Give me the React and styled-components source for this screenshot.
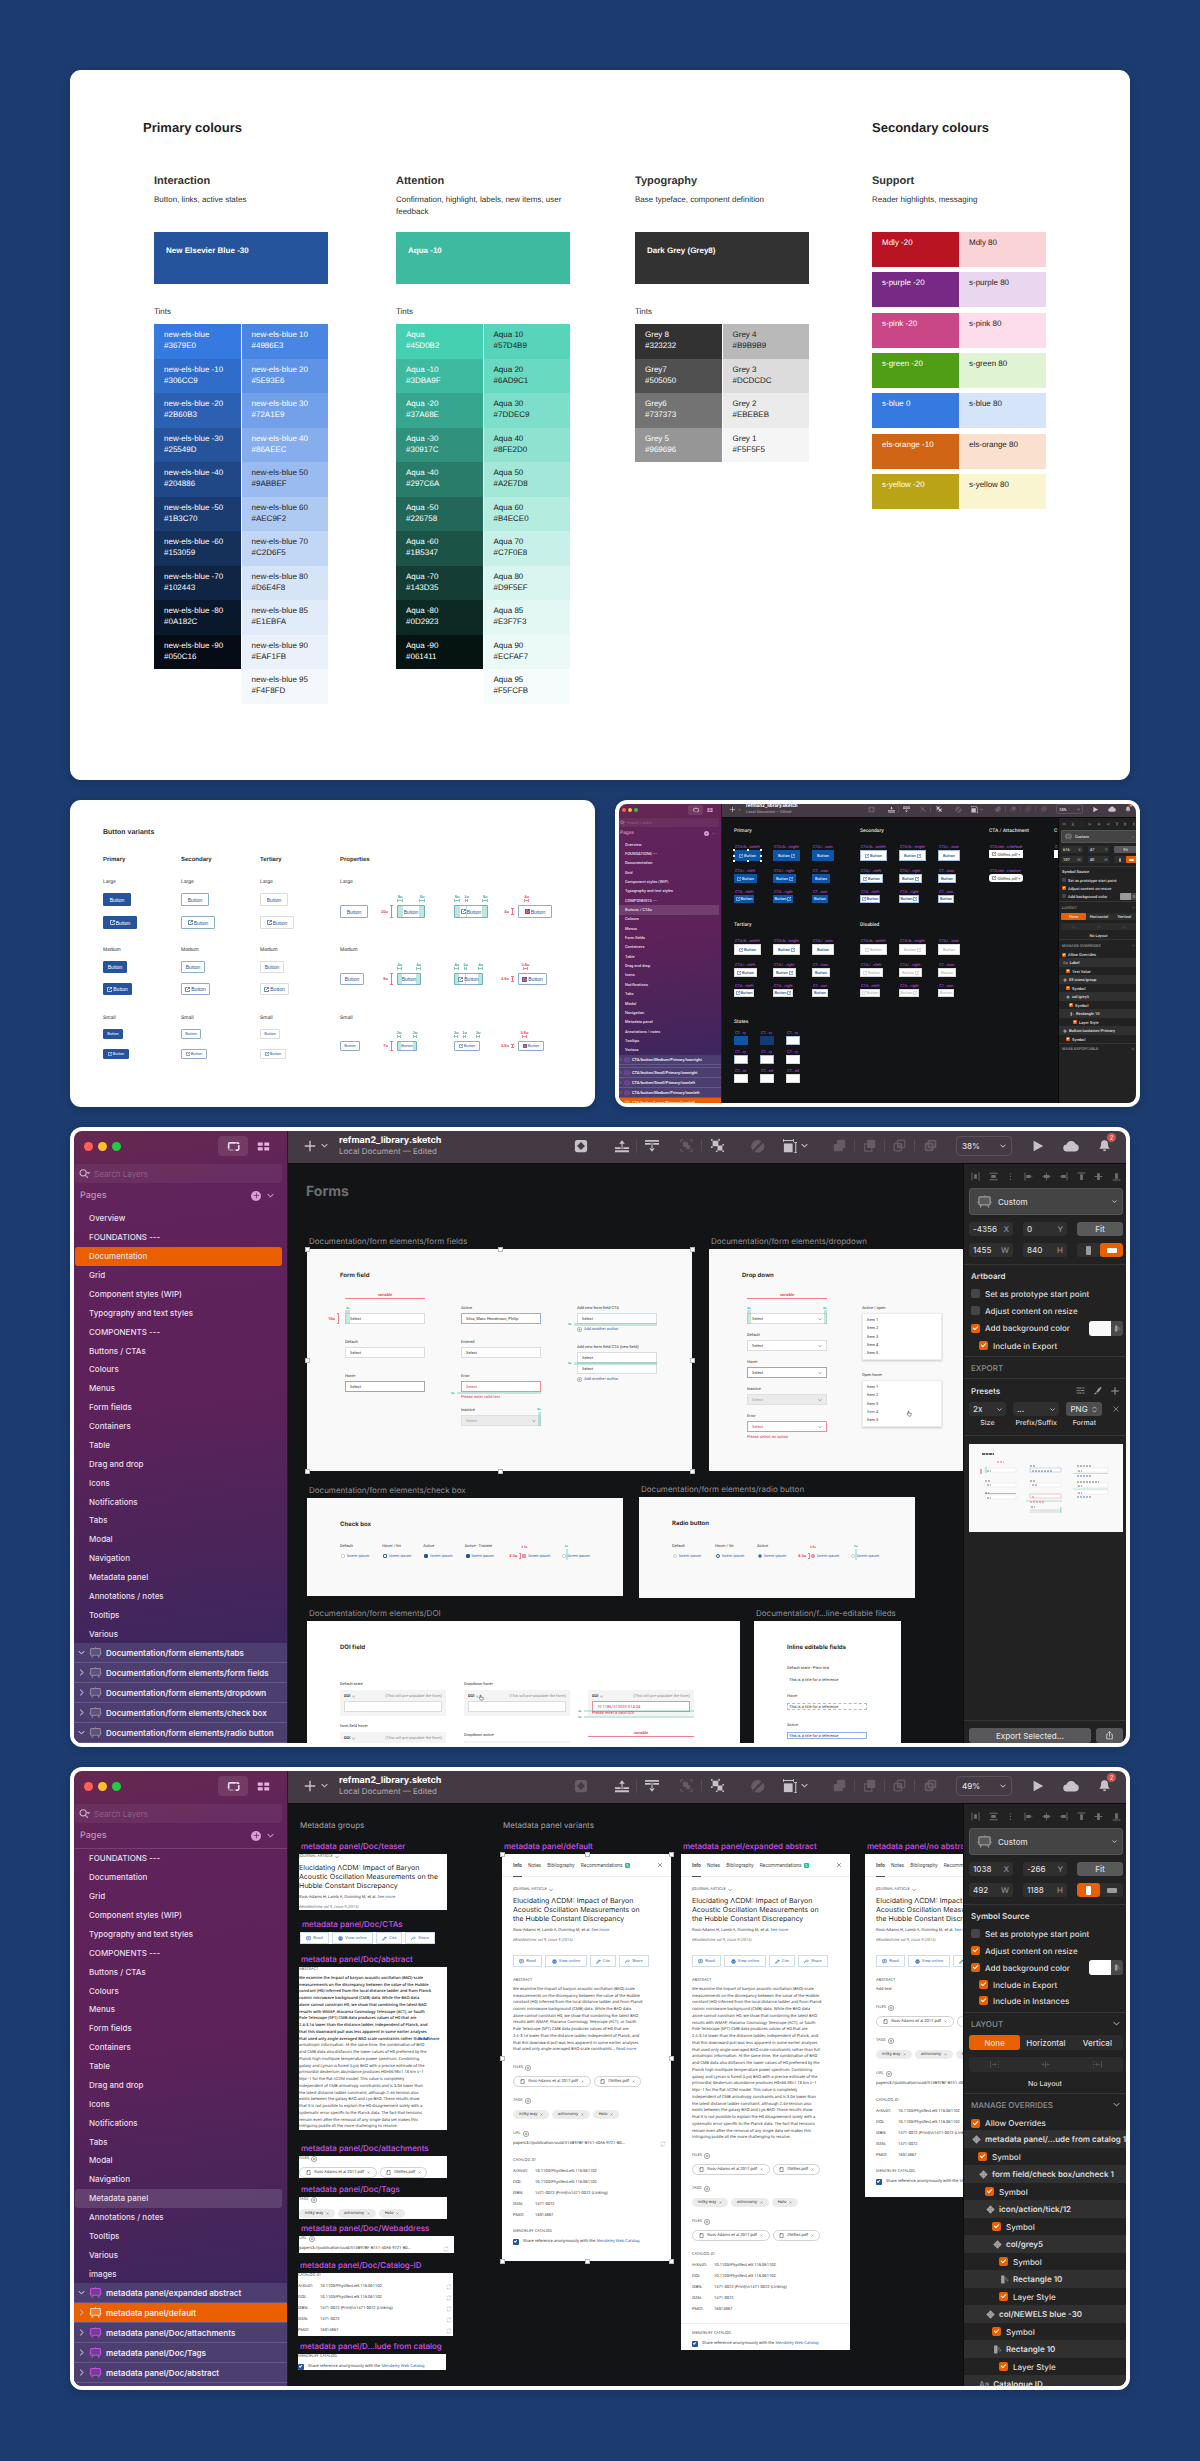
import React from "react";
import styled, { createGlobalStyle, css, ThemeProvider } from "styled-components";

/* ---------- foundations ---------- */

const Global = createGlobalStyle`
  *, *::before, *::after { box-sizing: border-box; }
  body { margin: 0; background: #1c3c70; text-rendering: geometricPrecision; }
  button, input, select { font: inherit; color: inherit; margin: 0; padding: 0; border: 0; background: none; min-width: 0; border-radius: 0; }
  button { cursor: pointer; }
  a { color: inherit; text-decoration: none; }
  h1, h2, h3, h4, p, dl, dt, dd, ul { margin: 0; padding: 0; font-weight: inherit; font-size: inherit; }
  svg { display: block; flex: none; }
`;

const ARIAL = '"Liberation Sans", Arial, sans-serif';
const INTER = 'Inter, "Noto Sans", sans-serif';
const ROBOTO = 'Roboto, "Noto Sans", sans-serif';
const NOTO = '"Noto Sans", Roboto, sans-serif';

/* length and font size that follow the scale of a window */
const u = (n) => (p) => `${Math.max(1, Math.round(n * p.theme.k))}px`;
const f = (n) => (p) => `${Math.ceil(n * p.theme.k)}px`;

const Page = styled.main`
  display: flex;
  flex-direction: column;
  gap: 20px;
  padding: 70px;
  background: #1c3c70;
  font-family: ${ARIAL};
`;

const Card = styled.section`
  background: #fff;
  border-radius: 11px;
  box-shadow: 0 2px 10px rgba(4, 16, 44, 0.25);
`;

/* ---------- colour card ---------- */

const ColourCard = styled(Card)`
  padding: 50px 84px 76px;
  color: #323232;
`;
const colourColumns = css`
  display: grid;
  grid-template-columns: 242fr 239fr 237fr 174fr;
`;
const ColourTitles = styled.div`
  ${colourColumns}
  font-size: 13px;
  line-height: 16px;
  font-weight: 700;
  color: #1f1f1f;
`;
const PrimaryTitle = styled.h2`
  grid-column: 1 / 4;
  margin-left: -11px;
`;
const SecondaryTitle = styled.h2``;
const ColourGroups = styled.div`
  ${colourColumns}
  margin-top: 38px;
`;
const Group = styled.div`
  width: 174px;
  font-size: 8px;
`;
const GroupTitle = styled.h3`
  font-size: 11px;
  line-height: 14px;
  font-weight: 700;
`;
const GroupText = styled.p`
  min-height: 38px;
  margin-top: 6px;
  line-height: 12px;
`;
const BaseSwatch = styled.div`
  height: 52px;
  padding: 13px 12px;
  background: ${(p) => p.$c};
  color: #fff;
  font-weight: 700;
  line-height: 12px;
`;
const TintsTitle = styled.p`
  margin-top: 22px;
  line-height: 12px;
`;
const Tints = styled.div`
  display: grid;
  grid-template-columns: 1fr 1fr;
  grid-template-rows: repeat(${(p) => p.$rows}, 1fr);
  grid-auto-flow: column;
  column-gap: 1px;
  height: ${(p) => p.$h}px;
  margin-top: 6px;
`;
const Tint = styled.div`
  padding: 5px 10px;
  background: ${(p) => p.$c};
  color: ${(p) => (p.$dark ? "#1d1d1d" : "#fff")};
  line-height: 11px;
`;
const Supports = styled.div`
  display: flex;
  flex-direction: column;
  justify-content: space-between;
  height: 277px;
`;
const Support = styled.div`
  display: grid;
  grid-template-columns: 1fr 1fr;
  height: 35px;
`;

const BLUES = [
  ["new-els-blue", "#3679E0"], ["new-els-blue -10", "#306CC9"], ["new-els-blue -20", "#2B60B3"], ["new-els-blue -30", "#25549D"],
  ["new-els-blue -40", "#204886"], ["new-els-blue -50", "#1B3C70"], ["new-els-blue -60", "#153059"], ["new-els-blue -70", "#102443"],
  ["new-els-blue -80", "#0A182C"], ["new-els-blue -90", "#050C16"], null,
  ["new-els-blue 10", "#4986E3"], ["new-els-blue 20", "#5E93E6"], ["new-els-blue 30", "#72A1E9"], ["new-els-blue 40", "#86AEEC"],
  ["new-els-blue 50", "#9ABBEF", 1], ["new-els-blue 60", "#AEC9F2", 1], ["new-els-blue 70", "#C2D6F5", 1], ["new-els-blue 80", "#D6E4F8", 1],
  ["new-els-blue 85", "#E1EBFA", 1], ["new-els-blue 90", "#EAF1FB", 1], ["new-els-blue 95", "#F4F8FD", 1],
];
const AQUAS = [
  ["Aqua", "#45D0B2"], ["Aqua -10", "#3DBA9F"], ["Aqua -20", "#37A68E"], ["Aqua -30", "#30917C"], ["Aqua -40", "#297C6A"],
  ["Aqua -50", "#226758"], ["Aqua -60", "#1B5347"], ["Aqua -70", "#143D35"], ["Aqua -80", "#0D2923"], ["Aqua -90", "#061411"], null,
  ["Aqua 10", "#57D4B9", 1], ["Aqua 20", "#6AD9C1", 1], ["Aqua 30", "#7DDEC9", 1], ["Aqua 40", "#8FE2D0", 1], ["Aqua 50", "#A2E7D8", 1],
  ["Aqua 60", "#B4ECE0", 1], ["Aqua 70", "#C7F0E8", 1], ["Aqua 80", "#D9F5EF", 1], ["Aqua 85", "#E3F7F3", 1], ["Aqua 90", "#ECFAF7", 1],
  ["Aqua 95", "#F5FCFB", 1],
];
const GREYS = [
  ["Grey 8", "#323232"], ["Grey7", "#505050"], ["Grey6", "#737373"], ["Grey 5", "#969696"],
  ["Grey 4", "#B9B9B9", 1], ["Grey 3", "#DCDCDC", 1], ["Grey 2", "#EBEBEB", 1], ["Grey 1", "#F5F5F5", 1],
];
const SUPPORTS = [
  ["Mdly -20", "#b81422", "Mdly 80", "#f9d3d6"], ["s-purple -20", "#762a86", "s-purple 80", "#e9d6ef"],
  ["s-pink -20", "#c94687", "s-pink 80", "#fddcec"], ["s-green -20", "#509e16", "s-green 80", "#e0f3d3"],
  ["s-blue 0", "#3679e0", "s-blue 80", "#d5e4f8"], ["els-orange -10", "#d06516", "els-orange 80", "#f9e0cf"],
  ["s-yellow -20", "#b9a316", "s-yellow 80", "#f9f5d1"],
];

function TintTable({ items, rows, height }) {
  return (
    <>
      <TintsTitle>Tints</TintsTitle>
      <Tints $rows={rows} $h={height}>
        {items.map((t, i) =>
          t ? (
            <Tint key={i} $c={t[1]} $dark={t[2]}>
              {t[0]}
              <br />
              {t[1]}
            </Tint>
          ) : (
            <span key={i} />
          )
        )}
      </Tints>
    </>
  );
}

function Colours() {
  return (
    <ColourCard>
      <ColourTitles>
        <PrimaryTitle>Primary colours</PrimaryTitle>
        <SecondaryTitle>Secondary colours</SecondaryTitle>
      </ColourTitles>
      <ColourGroups>
        <Group>
          <GroupTitle>Interaction</GroupTitle>
          <GroupText>Button, links, active states</GroupText>
          <BaseSwatch $c="#25549d">New Elsevier Blue -30</BaseSwatch>
          <TintTable items={BLUES} rows={11} height={380} />
        </Group>
        <Group>
          <GroupTitle>Attention</GroupTitle>
          <GroupText>Confirmation, highlight, labels, new items, user feedback</GroupText>
          <BaseSwatch $c="#3dba9f">Aqua -10</BaseSwatch>
          <TintTable items={AQUAS} rows={11} height={380} />
        </Group>
        <Group>
          <GroupTitle>Typography</GroupTitle>
          <GroupText>Base typeface, component definition</GroupText>
          <BaseSwatch $c="#323232">Dark Grey (Grey8)</BaseSwatch>
          <TintTable items={GREYS} rows={4} height={138} />
        </Group>
        <Group>
          <GroupTitle>Support</GroupTitle>
          <GroupText>Reader highlights, messaging</GroupText>
          <Supports>
            {SUPPORTS.map((s) => (
              <Support key={s[0]}>
                <Tint $c={s[1]}>{s[0]}</Tint>
                <Tint $c={s[3]} $dark>{s[2]}</Tint>
              </Support>
            ))}
          </Supports>
        </Group>
      </ColourGroups>
    </ColourCard>
  );
}

/* ---------- button variants card ---------- */

const HalfRow = styled.div`
  display: grid;
  grid-template-columns: 1fr 1fr;
  gap: 20px;
  margin-right: -10px;
`;
const VariantsCard = styled(Card)`
  padding: 28px 0 24px 33px;
  color: #323232;
  font-size: 5px;
`;
const VariantsTitle = styled.h2`
  font-size: 7px;
  line-height: 9px;
  font-weight: 700;
`;
const variantColumns = css`
  display: grid;
  grid-template-columns: 78fr 79fr 80fr 57fr 57fr 64fr 77fr;
`;
const VariantHeads = styled.div`
  ${variantColumns}
  margin-top: 20px;
  font-size: 6px;
  line-height: 6px;
  font-weight: 700;
`;
const VariantRow = styled.div`
  ${variantColumns}
  height: 68px;
  line-height: 6px;
`;
const VariantRows = styled.div`
  margin-top: 16px;
`;
const VariantStack = styled.div`
  display: flex;
  flex-direction: column;
  align-items: flex-start;
  gap: 10px;
`;
const SizeName = styled.p`
  margin-bottom: -2px;
`;
const BTN = {
  Large: { h: 13, w: 28, wi: 34, s: 5, pad: 6 },
  Medium: { h: 12, w: 24, wi: 29, s: 5, pad: 5 },
  Small: { h: 10, w: 20, wi: 26, s: 4, pad: 4 },
};
const TONES = {
  primary: css`background: #25549d; color: #fff; border: 1px solid #25549d;`,
  secondary: css`background: #fff; color: #25549d; border: 1px solid #8ea9d2;`,
  tertiary: css`background: #fff; color: #25549d; border: 1px solid #dcdcdc;`,
};
const Btn = styled.button`
  display: flex;
  align-items: center;
  justify-content: center;
  gap: 1px;
  width: ${(p) => p.$w}px;
  height: ${(p) => p.$h}px;
  font-size: ${(p) => p.$s}px;
  font-weight: 500;
  border-radius: 1px;
  ${(p) => TONES[p.$tone]}
`;
const PropCell = styled.div`
  padding-top: 20px;
`;
const Specimen = styled.div`
  position: relative;
  width: ${(p) => p.$w}px;
`;
const Strip = styled.span`
  position: absolute;
  top: 0;
  bottom: 0;
  left: ${(p) => p.$x}px;
  width: ${(p) => p.$w}px;
  background: rgba(61, 186, 159, 0.35);
`;
const TopMark = styled.span`
  position: absolute;
  bottom: 100%;
  left: ${(p) => p.$x}px;
  width: ${(p) => p.$w}px;
  margin-bottom: 2px;
  height: 9px;
  display: flex;
  justify-content: center;
  font-size: 4px;
  line-height: 5px;
  font-weight: 700;
  color: ${(p) => p.$c};
  white-space: nowrap;
  &::after {
    content: "";
    position: absolute;
    left: 0;
    right: 0;
    bottom: 1px;
    height: 3px;
    border-left: 1px solid;
    border-right: 1px solid;
    background: linear-gradient(currentColor, currentColor) center / 100% 1px no-repeat;
    opacity: 0.6;
  }
`;
const SideMark = styled.span`
  position: absolute;
  right: 100%;
  top: ${(p) => p.$y}px;
  bottom: ${(p) => p.$y}px;
  margin-right: 4px;
  display: flex;
  align-items: center;
  gap: 2px;
  font-size: 4px;
  font-weight: 700;
  color: #f0334a;
  &::after {
    content: "";
    align-self: stretch;
    width: 3px;
    border-top: 1px solid;
    border-bottom: 1px solid;
    background: linear-gradient(currentColor, currentColor) center / 1px 100% no-repeat;
    opacity: 0.7;
  }
`;
const GREEN = "#2aa889";
const RED = "#f0334a";

function LinkOut({ size = 5, red }) {
  return (
    <svg width={size} height={size} viewBox="0 0 10 10" fill="none" stroke="currentColor" strokeWidth="1.4" aria-hidden="true">
      {red && <rect x="-1" y="-1" width="12" height="12" fill="#e2647a" stroke="none" />}
      <path d="M5 1H1v8h8V6M6 1h3v3M9 1 4.500 5.500" />
    </svg>
  );
}

function SizedButton({ size, tone, icon, red }) {
  const b = BTN[size];
  return (
    <Btn $tone={tone} $h={b.h} $w={icon ? b.wi : b.w} $s={b.s}>
      {icon && <LinkOut size={b.s} red={red} />}
      Button
    </Btn>
  );
}
const PropLabel = styled.p`
  height: 6px;
  margin: -20px 0 20px;
`;
const PropSpacer = styled.div`
  height: 6px;
`;

function ButtonVariants() {
  const side = { Large: "10u", Medium: "9u", Small: "7u" };
  const pads = { Large: "5u", Medium: "4u", Small: "3u" };
  const icons = { Large: "4u", Medium: "3.5u", Small: "3.5u" };
  return (
    <VariantsCard>
      <VariantsTitle>Button variants</VariantsTitle>
      <VariantHeads>
        <span>Primary</span>
        <span>Secondary</span>
        <span>Tertiary</span>
        <span>Properties</span>
      </VariantHeads>
      <VariantRows>
        {["Large", "Medium", "Small"].map((size) => {
          const b = BTN[size];
          return (
            <VariantRow key={size}>
              {["primary", "secondary", "tertiary"].map((tone) => (
                <VariantStack key={tone}>
                  <SizeName>{size}</SizeName>
                  <SizedButton size={size} tone={tone} />
                  <SizedButton size={size} tone={tone} icon />
                </VariantStack>
              ))}
              <PropCell>
                <Specimen $w={b.w}>
                  <PropLabel>{size}</PropLabel>
                  <SizedButton size={size} tone="secondary" />
                </Specimen>
              </PropCell>
              <PropCell>
                <PropSpacer />
                <Specimen $w={b.w}>
                  <SideMark $y={0}>{side[size]}</SideMark>
                  <SizedButton size={size} tone="secondary" />
                  <Strip $x={0} $w={b.pad} />
                  <Strip $x={b.w - b.pad} $w={b.pad} />
                  <TopMark $x={0} $w={b.pad} $c={GREEN}>{pads[size]}</TopMark>
                  <TopMark $x={b.w - b.pad} $w={b.pad} $c={GREEN}>{pads[size]}</TopMark>
                </Specimen>
              </PropCell>
              <PropCell>
                <PropSpacer />
                <Specimen $w={b.wi}>
                  <SizedButton size={size} tone="secondary" icon />
                  {size !== "Small" && <Strip $x={0} $w={b.pad} />}
                  {size !== "Small" && <Strip $x={b.pad + 6} $w={1} />}
                  {size !== "Small" && <Strip $x={b.wi - b.pad} $w={b.pad} />}
                  <TopMark $x={0} $w={b.pad} $c={GREEN}>{pads[size]}</TopMark>
                  <TopMark $x={b.pad + 5} $w={3} $c={GREEN}>1u</TopMark>
                  <TopMark $x={b.wi - b.pad} $w={b.pad} $c={GREEN}>{pads[size]}</TopMark>
                </Specimen>
              </PropCell>
              <PropCell>
                <PropSpacer />
                <Specimen $w={b.wi}>
                  <SideMark $y={3}>{icons[size]}</SideMark>
                  <SizedButton size={size} tone="secondary" icon red />
                  <TopMark $x={b.pad} $w={5} $c={RED}>{icons[size]}</TopMark>
                </Specimen>
              </PropCell>
            </VariantRow>
          );
        })}
      </VariantRows>
    </VariantsCard>
  );
}

/* ---------- icons of the drawing app ---------- */

const SHAPES = {
  plus: <path d="M8 2v12M2 8h12" stroke="currentColor" strokeWidth="1.6" />,
  chevron: <path d="M1.500 5l6.500 6 6.500-6" stroke="currentColor" strokeWidth="2.400" fill="none" />,
  chevronRight: <path d="M5 1.500l6.500 6.500L5 14.500" stroke="currentColor" strokeWidth="2.400" fill="none" />,
  search: (
    <g stroke="currentColor" strokeWidth="1.6" fill="none">
      <circle cx="6" cy="7" r="4.500" />
      <path d="M9 10.500l4 4" />
      <path d="M12 6l1.700 2L15.500 6" />
    </g>
  ),
  panel: (
    <g stroke="currentColor" strokeWidth="2" fill="none">
      <path d="M2 10.500V5a1.500 1.500 0 0 1 1.500-1.500H11" />
      <path d="M14.500 6v5a1.500 1.500 0 0 1-1.500 1.500h-2.500M11.500 3.500H13a1.500 1.500 0 0 1 1.500 1.500" />
      <path d="M2 8v3a1.500 1.500 0 0 0 1.500 1.500H8" opacity="0.350" />
    </g>
  ),
  grid: <path fill="currentColor" d="M1 3h6v4H1zM9 3h6v4H9zM1 9h6v4H1zM9 9h6v4H9z" />,
  symbol: <path fill="currentColor" fillRule="evenodd" d="M4 1h8a3 3 0 0 1 3 3v8a3 3 0 0 1-3 3H4a3 3 0 0 1-3-3V4a3 3 0 0 1 3-3zM8 3.500 3.500 8 8 12.500 12.500 8z" />,
  forward: <path fill="currentColor" d="M0 9.500h6.500v2H0zM9.500 9.500H16v2H9.500zM0 12.800h16v2.200H0zM7.400 4.500h1.300v7.200H7.400zM4.800 5.500 8 1.500l3.200 4z" />,
  backward: <path fill="currentColor" d="M0 1h16v2.200H0zM0 4.500h6.500v2H0zM9.500 4.500H16v2H9.500zM7.400 4.300h1.300v7.200H7.400zM4.800 10.500 8 14.500l3.200-4z" />,
  group: (
    <g stroke="currentColor" strokeWidth="1.200" fill="none">
      <path d="M1 4V1h3M12 1h3v3M15 12v3h-3M4 15H1v-3" />
      <path fill="currentColor" d="M4 4h5v5H4zM8 8h4v4H8z" />
    </g>
  ),
  ungroup: (
    <g fill="currentColor">
      <path d="M2 2h7v7H2zM8 8h6v6H8z" />
      <path d="M0 0h2v2H0zM9 0h2v2H9zM0 9h2v2H0zM14 6h2v2h-2zM14 14h2v2h-2zM6 14h2v2H6z" />
    </g>
  ),
  rotate: (
    <g fill="none" stroke="currentColor" strokeWidth="1.600">
      <path d="M2.500 12.500a6.400 6.400 0 0 1 9-9" fill="currentColor" />
      <path d="M13.500 5a6.400 6.400 0 0 1-9 8.500" fill="currentColor" />
      <path d="M1.500 14.500l13-13" stroke="#463a44" />
    </g>
  ),
  scale: (
    <g fill="currentColor">
      <path d="M1 5h10v10H1z" />
      <path d="M0 1h12v1.200H0zM0 0h1v3.500H0zM11.500 0h1v3.500h-1zM14 4h1.200v12H14zM12.800 3.500H16v1h-3.200zM12.800 15H16v1h-3.200z" />
    </g>
  ),
  union: <path fill="currentColor" d="M6 1h8a1 1 0 0 1 1 1v8a1 1 0 0 1-1 1h-2v3a1 1 0 0 1-1 1H2a1 1 0 0 1-1-1V7a1 1 0 0 1 1-1h3V2a1 1 0 0 1 1-1z" />,
  subtract: (
    <g>
      <path fill="currentColor" d="M6 1h8a1 1 0 0 1 1 1v8a1 1 0 0 1-1 1H6a1 1 0 0 1-1-1V2a1 1 0 0 1 1-1z" />
      <path fill="none" stroke="currentColor" strokeWidth="1.400" d="M5 6H2v9h9v-4" />
    </g>
  ),
  intersect: (
    <g fill="none" stroke="currentColor" strokeWidth="1.600">
      <rect x="5.500" y="1.500" width="9" height="9" rx="1.500" />
      <rect x="1.500" y="5.500" width="9" height="9" rx="1.500" />
      <path d="M7.500 7.500h2v2h-2z" fill="currentColor" />
    </g>
  ),
  difference: (
    <g fill="none" stroke="currentColor" strokeWidth="2.400">
      <rect x="5.500" y="2" width="8.500" height="8.500" rx="1.500" />
      <rect x="2" y="5.500" width="8.500" height="8.500" rx="1.500" />
    </g>
  ),
  play: <path fill="currentColor" d="M3 2l11 6-11 6z" />,
  cloud: <path fill="currentColor" d="M4 13.500a3.500 3.500 0 0 1-.4-7A4.800 4.800 0 0 1 12.600 6 3.800 3.800 0 0 1 12.500 13.500z" />,
  bell: <path fill="currentColor" d="M8 1.500c3 0 4.300 2 4.300 4.600 0 3 .7 4 2.200 5.900h-13C3 10 3.700 9.100 3.700 6.100 3.700 3.500 5 1.500 8 1.500zM6 13h4c-.3 1.300-1 2-2 2s-1.700-.7-2-2z" />,
  artboard: (
    <g fill="none" stroke="currentColor" strokeWidth="1.300">
      <rect x="2" y="3" width="12" height="8.500" rx="1" fill="currentColor" fillOpacity="0.250" />
      <path d="M0.500 9h1.500M14 9h1.500M4.500 12l-1 2.500M11.500 12l1 2.500M8 1.500V3" />
    </g>
  ),
  diamond: (
    <g>
      <path fill="currentColor" d="M8 .5L15.500 8 8 15.500.5 8z" />
      <path d="M4.800 4.800l1.700 1.700M11.200 4.800L9.500 6.500M4.800 11.200l1.700-1.700M11.200 11.200L9.500 9.500" stroke="#303030" strokeWidth="0.800" />
    </g>
  ),
  style: (
    <g fill="currentColor">
      <rect x="2" y="1" width="6" height="14" rx="1" />
      <path d="M9.500 3.500l3 2-3 6zM13 7l2.500 2.500-4.500 4z" opacity=".55" />
    </g>
  ),
  distH: <path fill="currentColor" d="M1 1h1.500v14H1zM13.500 1H15v14h-1.500zM5.500 4h5v8h-5z" />,
  distV: <path fill="currentColor" d="M1 1.500h14V3H1zM1 13h14v1.500H1zM4 5.500h8v5H4z" />,
  dots: <path fill="currentColor" d="M7 2h2v2H7zM7 7h2v2H7zM7 12h2v2H7z" />,
  left: <path fill="currentColor" d="M1 1h1.500v14H1zM4 5.500h8v5H4zM12 7.500h3v1h-3z" />,
  centerH: <path fill="currentColor" d="M7.300 1h1.500v14H7.300zM3 5.500h10v5H3zM0 7.500h16v1H0z" />,
  right: <path fill="currentColor" d="M13.500 1H15v14h-1.500zM4 5.500h8v5H4zM1 7.500h3v1H1z" />,
  top: <path fill="currentColor" d="M1 1h14v1.500H1zM5.500 4h5v10h-5z" />,
  centerV: <path fill="currentColor" d="M1 7.300h14v1.500H1zM5.500 2h5v12h-5z" />,
  bottom: <path fill="currentColor" d="M1 13.500h14V15H1zM5.500 2h5v10h-5z" />,
  sliders: (
    <g stroke="currentColor" strokeWidth="1.500">
      <path d="M1 3.500h6M11 3.500h4M1 8h3M8 8h7M1 12.500h6M11 12.500h4M8.500 2v3M5.500 6.500v3M8.500 11v3" />
    </g>
  ),
  knife: <path fill="currentColor" d="M15 1c-4 2-7 5-9 9l2 2c4-3 6-6 7-11zM5 11l-4 4c3 0 5-.5 6-2z" />,
  cross: <path d="M3 3l10 10M13 3L3 13" stroke="currentColor" strokeWidth="1.500" />,
  updown: <path d="M4 6l4-4 4 4M4 10l4 4 4-4" stroke="currentColor" strokeWidth="1.600" fill="none" />,
  share: <path d="M5 6H3v8h10V6h-2M8 10V1.500M5 4l3-3 3 3" stroke="currentColor" strokeWidth="1.400" fill="none" />,
  pinLeft: <path d="M1 2v12M4 8h7M8 5l3 3-3 3M15 2v2M15 7v2M15 12v2" stroke="currentColor" strokeWidth="1.300" fill="none" />,
  pinCenter: <path d="M8 2v12M1 8h4M3.500 5.500L6 8l-2.500 2.500M15 8h-4M12.500 5.500L10 8l2.500 2.500" stroke="currentColor" strokeWidth="1.300" fill="none" />,
  pinRight: <path d="M15 2v12M12 8H5M8 5L5 8l3 3M1 2v2M1 7v2M1 12v2" stroke="currentColor" strokeWidth="1.300" fill="none" />,
  addCircle: (
    <g fill="none" stroke="currentColor" strokeWidth="1.300">
      <circle cx="8" cy="8" r="7" />
      <path d="M8 4.500v7M4.500 8h7" />
    </g>
  ),
  refresh: <path d="M2 7a6 6 0 0 1 11-2M14 9a6 6 0 0 1-11 2M13 1.500V5H9.500M3 14.500V11h3.500" stroke="currentColor" strokeWidth="1.200" fill="none" />,
  doc: <path d="M3 3.500L6 1h7v14H3zM3 4h3V1" stroke="currentColor" strokeWidth="1.600" fill="none" />,
  read: <path d="M2 2h12v9H9l-3 3v-3H2zM5 5h6M5 8h4" stroke="currentColor" strokeWidth="1.800" fill="none" />,
  globe: (
    <g>
      <circle cx="8" cy="8" r="7" fill="currentColor" />
      <path d="M1 8h14M8 1c-4 4-4 10 0 14M8 1c4 4 4 10 0 14" stroke="#fff" fill="none" />
    </g>
  ),
  cite: <path d="M2 14l3-1 8-8-2-2-8 8zM9 2l5 5" stroke="currentColor" strokeWidth="2" fill="none" />,
  arrow: <path d="M1 13c0-5 3-7 9-7M10 2l4 4-4 4" stroke="currentColor" strokeWidth="2" fill="none" />,
  hand: <path d="M6 14l-3-4V8l2 1V2.500h1.700V7L12 8v3l-1.500 3z" stroke="#333" strokeWidth="1.200" fill="#fff" />,
};
const Glyph = styled.svg`
  width: ${(p) => u(p.$s)(p)};
  height: ${(p) => u(p.$s)(p)};
  color: ${(p) => p.$c || "currentColor"};
`;
function Icon({ name, size = 14, color }) {
  return (
    <Glyph viewBox="0 0 16 16" $s={size} $c={color} fill="none" aria-hidden="true">
      {SHAPES[name]}
    </Glyph>
  );
}

/* ---------- window ---------- */

const Frame = styled.section`
  padding: 4px;
  background: #fff;
  border-radius: 12px;
  box-shadow: 0 2px 10px rgba(4, 16, 44, 0.25);
  font-family: ${(p) => p.$face};
`;
const Clip = styled.div`
  overflow: hidden;
  border-radius: 8px;
`;
const Body = styled.div`
  display: grid;
  grid-template-columns: auto minmax(0, 1fr);
  grid-template-rows: minmax(0, 1fr);
  height: ${(p) => p.$h}px;
  margin: ${(p) => -p.$bleed}px;
  font-size: ${f(8)};
  color: #dcd6dc;
`;
const Sidebar = styled.nav`
  display: flex;
  flex-direction: column;
  width: ${u(214)};
  min-height: 0;
  background: linear-gradient(172deg, #66284f 0, #60235b 12%, #5c2259 45%, #47255b 72%, #36275f 92%, #33285f 100%);
  border-right: 1px solid #2b1730;
`;
const SideHead = styled.div`
  display: flex;
  align-items: center;
  height: ${u(33)};
  padding: 0 ${u(17)} ${u(3)} ${u(10)};
`;
const Light = styled.span`
  width: ${u(9)};
  height: ${u(9)};
  margin-right: ${u(5)};
  border-radius: 50%;
  background: ${(p) => p.$c};
`;
const PanelToggle = styled.button`
  display: flex;
  align-items: center;
  justify-content: center;
  width: ${u(30)};
  height: ${u(20)};
  margin-left: auto;
  margin-right: ${u(9)};
  border-radius: ${u(4)};
  background: rgba(255, 255, 255, 0.1);
  color: #eadbe8;
`;
const GridToggle = styled.button`
  color: #e5b0de;
`;
const SearchField = styled.label`
  display: flex;
  align-items: center;
  gap: ${u(4)};
  height: ${u(19)};
  margin-right: ${u(5)};
  margin-left: 1px;
  padding-left: ${u(4)};
  border-radius: ${u(3)};
  background: rgba(255, 255, 255, 0.05);
  color: #d3b4d0;
`;
const SearchInput = styled.input`
  flex: 1;
  &::placeholder { color: #8f5f87; opacity: 1; }
`;
const PagesHead = styled.div`
  display: flex;
  align-items: center;
  gap: ${u(6)};
  height: ${u(26)};
  padding: 0 ${u(13)} 0 ${u(6)};
  border-bottom: 1px solid ${(p) => (p.$line ? "rgba(255,255,255,.14)" : "transparent")};
  color: #c194bb;
  font-size: ${f(9)};
  font-weight: 500;
`;
const PagesName = styled.span`
  flex: 1;
`;
const AddPage = styled.button`
  display: flex;
  align-items: center;
  justify-content: center;
  width: ${u(10)};
  height: ${u(10)};
  border-radius: 50%;
  background: #dc9dd6;
  color: #5c2259;
`;
const PageList = styled.div`
  flex: 1;
  display: flex;
  flex-direction: column;
  min-height: 0;
`;
const PageRow = styled.button`
  flex: 1 1 0;
  min-height: 0;
  margin-right: ${u(5)};
  margin-left: 1px;
  padding-left: ${u(14)};
  border-radius: ${u(3)};
  text-align: left;
  line-height: 1;
  font-weight: 500;
  color: #e8dee8;
  background: ${(p) => ({ hot: "#ea6000", soft: "rgba(255,255,255,.13)" }[p.$on] || "none")};
`;
const LayerList = styled.div`
  flex: none;
  height: ${(p) => p.$h}px;
  overflow: hidden;
  background: #4c3f70;
`;
const LayerRow = styled.button`
  display: flex;
  align-items: center;
  gap: ${u(4)};
  width: 100%;
  height: ${(p) => (p.$thin ? "3px" : u(20)(p))};
  padding-left: ${u(4)};
  border-bottom: 1px solid #64588a;
  background: ${(p) => (p.$on ? "#ea6000" : "#4c3f70")};
  color: #efe9f3;
  font-weight: 600;
  white-space: nowrap;
`;
const Main = styled.div`
  display: grid;
  grid-template-rows: auto minmax(0, 1fr);
  min-width: 0;
`;
const Toolbar = styled.header`
  display: flex;
  align-items: center;
  gap: ${u(11)};
  height: ${u(33)};
  padding: 0 ${u(7)} ${u(3)} ${u(15)};
  background: #443a43;
  border-bottom: 1px solid #0c0c0d;
  color: #c9c1c9;
`;
const DocBlock = styled.div`
  flex: 1;
  display: flex;
  align-items: center;
  gap: ${u(4)};
  min-width: 0;
`;
const DocText = styled.div`
  margin-left: ${u(7)};
  line-height: ${u(10)};
  white-space: nowrap;
`;
const DocName = styled.h2`
  font-size: ${f(9)};
  font-weight: 700;
  color: #fff;
`;
const DocState = styled.p`
  font-size: ${f(8)};
  color: #b5acb5;
`;
const Tools = styled.div`
  display: flex;
  gap: ${(p) => (p.$gap ? u(p.$gap)(p) : 0)};
`;
const Tool = styled.button`
  position: relative;
  display: flex;
  align-items: center;
  justify-content: center;
  gap: ${u(4)};
  width: ${(p) => u(p.$w || 30)(p)};
  color: ${(p) => (p.$dim ? "#665b66" : "#c9c1c9")};
  border-right: ${(p) => (p.$line ? "1px solid #544954" : "0")};
`;
const ZoomSelect = styled.label`
  position: relative;
  display: flex;
  align-items: center;
  width: ${u(56)};
  height: ${u(20)};
  padding: 0 ${u(5)};
  border: 1px solid #5d525c;
  border-radius: ${u(4)};
  color: #e6e0e6;
  font-weight: 500;
`;
const PlainSelect = styled.select`
  appearance: none;
  flex: 1;
  width: 100%;
  outline: none;
  text-align: inherit;
`;
const Badge = styled.span`
  position: absolute;
  left: 60%;
  top: ${(p) => -Math.round(5 * p.theme.k)}px;
  width: ${u(9)};
  height: ${u(9)};
  border-radius: 50%;
  background: #d4504f;
  color: #fff;
  font-size: ${f(6)};
  line-height: ${u(9)};
  text-align: center;
`;
const Work = styled.div`
  display: grid;
  grid-template-columns: minmax(0, 1fr) auto;
  grid-template-rows: minmax(0, 1fr);
  min-height: 0;
`;
const Canvas = styled.div`
  position: relative;
  overflow: hidden;
  background: #121416;
`;

function Shell({ k, h, face = INTER, bleed = 0, pages, selected, selectedTone, line, layers, layersH, zoom, dimSymbol, children, inspector }) {
  return (
    <ThemeProvider theme={{ k }}>
      <Frame $face={face}>
        <Clip>
          <Body $h={h} $bleed={bleed}>
            <Sidebar>
              <SideHead>
                <Light $c="#ff5f57" />
                <Light $c="#febc2e" />
                <Light $c="#28c840" />
                <PanelToggle aria-label="Canvas"><Icon name="panel" size={13} /></PanelToggle>
                <GridToggle aria-label="Components"><Icon name="grid" size={13} /></GridToggle>
              </SideHead>
              <SearchField>
                <Icon name="search" size={11} />
                <SearchInput placeholder="Search Layers" aria-label="Search Layers" />
              </SearchField>
              <PagesHead $line={line}>
                <PagesName>Pages</PagesName>
                <AddPage aria-label="Add page"><Icon name="plus" size={7} /></AddPage>
                <Icon name="chevron" size={7} />
              </PagesHead>
              <PageList>
                {pages.map((n) => (
                  <PageRow key={n} $on={n === selected ? selectedTone : ""}>{n}</PageRow>
                ))}
              </PageList>
              <LayerList $h={layersH}>
                {layers.map((l, i) => (
                  <LayerRow key={i} $on={l.on} $thin={!l.name}>
                    {l.name && (
                      <>
                        <Icon name={l.open ? "chevron" : "chevronRight"} size={7} color="#b9abc9" />
                        <Icon name="artboard" size={13} color={l.on ? "#ffd9bd" : l.c} />
                        {l.name}
                      </>
                    )}
                  </LayerRow>
                ))}
              </LayerList>
            </Sidebar>
            <Main>
              <Toolbar>
                <DocBlock>
                  <Icon name="plus" size={14} />
                  <Icon name="chevron" size={7} />
                  <DocText>
                    <DocName>refman2_library.sketch</DocName>
                    <DocState>Local Document — Edited</DocState>
                  </DocText>
                </DocBlock>
                <Tools>
                  <Tool $dim={dimSymbol} aria-label="Create symbol"><Icon name="symbol" /></Tool>
                </Tools>
                <Tools $gap={5}>
                  <Tools>
                    <Tool $line aria-label="Forward"><Icon name="forward" /></Tool>
                    <Tool aria-label="Backward"><Icon name="backward" /></Tool>
                  </Tools>
                  <Tools>
                    <Tool $dim $line aria-label="Group"><Icon name="group" size={13} /></Tool>
                    <Tool aria-label="Ungroup"><Icon name="ungroup" size={13} /></Tool>
                  </Tools>
                </Tools>
                <Tools $gap={4}>
                  <Tool $dim aria-label="Rotate"><Icon name="rotate" /></Tool>
                  <Tool $w={37} aria-label="Scale"><Icon name="scale" /><Icon name="chevron" size={7} /></Tool>
                </Tools>
                <Tools>
                  <Tool $dim $line aria-label="Union"><Icon name="union" size={13} /></Tool>
                  <Tool $dim $line aria-label="Subtract"><Icon name="subtract" size={13} /></Tool>
                  <Tool $dim $line aria-label="Intersect"><Icon name="intersect" size={13} /></Tool>
                  <Tool $dim aria-label="Difference"><Icon name="difference" size={13} /></Tool>
                </Tools>
                <ZoomSelect>
                  <PlainSelect aria-label="Zoom"><option>{zoom}</option></PlainSelect>
                  <Icon name="chevron" size={6} />
                </ZoomSelect>
                <Tools $gap={3}>
                  <Tool aria-label="Play"><Icon name="play" /></Tool>
                  <Tool aria-label="Cloud"><Icon name="cloud" size={16} /></Tool>
                  <Tool aria-label="Notifications"><Icon name="bell" size={13} /><Badge>2</Badge></Tool>
                </Tools>
              </Toolbar>
              <Work>
                <Canvas>{children}</Canvas>
                {inspector}
              </Work>
            </Main>
          </Body>
        </Clip>
      </Frame>
    </ThemeProvider>
  );
}

/* ---------- inspector ---------- */

const Inspector = styled.aside`
  display: flex;
  flex-direction: column;
  width: ${u(163)};
  min-height: 0;
  overflow: hidden;
  background: #222;
  border-left: 1px solid #0c0c0d;
  color: #dedede;
  font-weight: 500;
`;
const Aligns = styled.div`
  display: flex;
  flex: none;
  justify-content: space-between;
  align-items: center;
  height: ${u(24)};
  padding: 0 ${u(5)} 0 ${u(7)};
  color: #6d6d6d;
`;
const Preset = styled.label`
  display: flex;
  flex: none;
  align-items: center;
  gap: ${u(6)};
  height: ${u(27)};
  margin: 0 ${u(3)} 0 ${u(5)};
  padding: 0 ${u(5)} 0 ${u(7)};
  border: 1px solid #545454;
  border-radius: ${u(3)};
  background: #444;
`;
const Frames = styled.div`
  display: grid;
  flex: none;
  grid-template-columns: 44fr 44fr 46fr;
  gap: ${u(7)} ${u(10)};
  padding: ${u(7)} ${u(3)} ${u(7)} ${u(5)};
  border-bottom: 1px solid #363636;
`;
const NumberBox = styled.label`
  display: flex;
  align-items: center;
  height: ${u(14)};
  padding: 0 ${u(4)};
  border-radius: ${u(3)};
  background: #2f2f2f;
  color: #8c8c8c;
`;
const NumberInput = styled.input`
  flex: 1;
  width: 100%;
  color: #dedede;
`;
const FitButton = styled.button`
  height: ${u(14)};
  border-radius: ${u(3)};
  background: #59595b;
`;
const Orient = styled.div`
  display: grid;
  grid-template-columns: 1fr 1fr;
  height: ${u(14)};
  border-radius: ${u(3)};
  background: #2f2f2f;
  overflow: hidden;
`;
const OrientButton = styled.button`
  display: flex;
  align-items: center;
  justify-content: center;
  border-radius: ${u(3)};
  background: ${(p) => (p.$on ? "#ea6000" : "none")};
  &::after {
    content: "";
    width: ${(p) => u(p.$tall ? 5 : 10)(p)};
    height: ${(p) => u(p.$tall ? 9 : 5)(p)};
    border-radius: 1px;
    background: ${(p) => (p.$on ? "#fff" : "#9a9a9a")};
  }
`;
const Block = styled.div`
  display: flex;
  flex: none;
  flex-direction: column;
  padding: ${u(3)} ${u(3)} ${(p) => u(p.$pb || 2)(p)} ${u(7)};
  border-bottom: 1px solid #363636;
`;
const BlockTitle = styled.h3`
  line-height: ${u(17)};
  font-weight: 600;
`;
const CheckLabel = styled.label`
  display: flex;
  align-items: center;
  gap: ${u(5)};
  height: ${(p) => u(p.$h || 17)(p)};
  padding-left: ${(p) => (p.$in ? u(p.$in)(p) : 0)};
  flex: none;
  white-space: nowrap;
`;
const Tick = styled.input`
  appearance: none;
  position: relative;
  flex: none;
  width: ${u(9)};
  height: ${u(9)};
  border-radius: ${u(2)};
  background: #464646;
  &:checked { background: #ea6000; }
  &:checked::after {
    content: "";
    position: absolute;
    left: ${u(2)};
    top: ${u(2)};
    width: ${u(5)};
    height: ${u(3)};
    border-left: 1px solid #fff;
    border-bottom: 1px solid #fff;
    rotate: -45deg;
  }
`;
const Well = styled.span`
  display: flex;
  align-items: center;
  justify-content: flex-end;
  width: ${u(34)};
  height: ${u(15)};
  margin-left: auto;
  padding-right: ${u(2)};
  border-radius: ${u(3)};
  background: linear-gradient(90deg, ${(p) => p.$c} 66%, #4a4a4a 66%);
  color: #999;
`;
const Caps = styled.div`
  display: flex;
  flex: none;
  align-items: center;
  justify-content: space-between;
  height: ${u(22)};
  padding: 0 ${u(6)} 0 ${u(7)};
  border-bottom: 1px solid ${(p) => (p.$line ? "#363636" : "transparent")};
  color: #8f8f8f;
`;
const Segments = styled.div`
  display: grid;
  flex: none;
  grid-template-columns: 1fr 1fr 1fr;
  height: ${u(15)};
  margin: 0 ${u(3)} ${u(7)} ${u(5)};
  border-radius: ${u(3)};
  background: #2c2c2c;
  color: ${(p) => (p.$dim ? "#5e5e5e" : "#dedede")};
`;
const Segment = styled.button`
  display: flex;
  align-items: center;
  justify-content: center;
  border-radius: ${u(3)};
  background: ${(p) => (p.$on ? "#ea6000" : "none")};
`;
const NoLayout = styled.p`
  flex: none;
  height: ${u(15)};
  padding-top: 1px;
  border-bottom: 1px solid #363636;
  font-size: ${f(7)};
  line-height: ${u(8)};
  text-align: center;
`;
const Override = styled.div`
  display: flex;
  flex: none;
  align-items: center;
  gap: ${u(4)};
  height: ${u(18)};
  padding-left: ${(p) => u(8 + 7 * p.$lv)(p)};
  background: #303030;
  font-weight: 600;
  white-space: nowrap;
`;
const TextMark = styled.span`
  color: #9a9a9a;
  font-weight: 500;
`;

function InspectorTop({ x, y, w, h, tall, children }) {
  return (
    <>
      <Aligns>
        {["distH", "distV", "dots", "left", "centerH", "right", "top", "centerV", "bottom"].map((n) => (
          <Icon key={n} name={n} size={9} />
        ))}
      </Aligns>
      <Preset>
        <Icon name="artboard" size={15} color="#9b9b9b" />
        <PlainSelect aria-label="Preset"><option>Custom</option></PlainSelect>
        <Icon name="chevron" size={5} />
      </Preset>
      <Frames>
        <NumberBox><NumberInput defaultValue={x} aria-label="X" />X</NumberBox>
        <NumberBox><NumberInput defaultValue={y} aria-label="Y" />Y</NumberBox>
        <FitButton>Fit</FitButton>
        <NumberBox><NumberInput defaultValue={w} aria-label="W" />W</NumberBox>
        <NumberBox><NumberInput defaultValue={h} aria-label="H" />H</NumberBox>
        <Orient>
          <OrientButton $tall $on={tall} aria-label="Portrait" />
          <OrientButton $on={!tall} aria-label="Landscape" />
        </Orient>
      </Frames>
      {children}
    </>
  );
}

function Check({ children, on, indent, well, h }) {
  return (
    <CheckLabel $in={indent} $h={h}>
      <Tick type="checkbox" defaultChecked={on} />
      {children}
      {well && <Well $c={well}><Icon name="style" size={7} /></Well>}
    </CheckLabel>
  );
}

function SymbolInspector({ overrides, instances, background, wellColor, frame, tail }) {
  return (
    <Inspector>
      <InspectorTop {...frame} tall={!!instances}>
        <Block $pb={instances ? 4 : 2}>
          <BlockTitle>Symbol Source</BlockTitle>
          <Check>Set as prototype start point</Check>
          <Check on>Adjust content on resize</Check>
          <Check on={background} well={wellColor}>Add background color</Check>
          {instances && <Check on indent={8}>Include in Export</Check>}
          {instances && <Check on indent={8} h={15}>Include in Instances</Check>}
        </Block>
        <Caps>LAYOUT<Icon name="chevron" size={7} /></Caps>
        <Segments>
          <Segment $on>None</Segment>
          <Segment>Horizontal</Segment>
          <Segment>Vertical</Segment>
        </Segments>
        <Segments $dim>
          <Segment aria-label="Pin left"><Icon name="pinLeft" size={9} /></Segment>
          <Segment aria-label="Pin centre"><Icon name="pinCenter" size={9} /></Segment>
          <Segment aria-label="Pin right"><Icon name="pinRight" size={9} /></Segment>
        </Segments>
        <NoLayout>No Layout</NoLayout>
        <Caps>MANAGE OVERRIDES<Icon name="chevron" size={7} /></Caps>
        <CheckLabel $in={7} $h={14}><Tick type="checkbox" defaultChecked />Allow Overrides</CheckLabel>
        {overrides.map(([lv, kind, name], i) =>
          kind === "check" ? (
            <CheckLabel key={i} $in={14 + 7 * lv} $h={17}>
              <Tick type="checkbox" defaultChecked />
              {name}
            </CheckLabel>
          ) : (
            <Override key={i} $lv={lv}>
              {kind === "text" ? <TextMark>Aa</TextMark> : <Icon name={kind} size={9} color="#a2a2a2" />}
              {name}
            </Override>
          )
        )}
        {tail}
      </InspectorTop>
    </Inspector>
  );
}

const PresetRow = styled.div`
  display: flex;
  align-items: center;
  gap: 8px;
  height: 23px;
  padding: 0 6px 0 7px;
  font-weight: 600;
  color: #9d9d9d;
`;
const PresetName = styled.span`
  flex: 1;
  color: #dedede;
`;
const ExportGrid = styled.div`
  display: grid;
  grid-template-columns: 38fr 48fr 37fr 14fr;
  column-gap: 7px;
  padding: 0 3px 6px 5px;
  border-bottom: 1px solid #363636;
  text-align: center;
  font-size: 7px;
  line-height: 13px;
`;
const ExportBox = styled.label`
  display: flex;
  align-items: center;
  height: 14px;
  padding: 0 4px;
  border-radius: 3px;
  background: ${(p) => (p.$lit ? "#4e4e50" : "#2f2f2f")};
  font-size: 8px;
  text-align: left;
`;
const CenterCell = styled.span`
  display: flex;
  align-items: center;
  justify-content: center;
`;
const Preview = styled.svg`
  width: auto;
  margin: 8px 3px 0 5px;
  background: #f9f9f9;
`;
const ExportFooter = styled.div`
  display: grid;
  grid-template-columns: 1fr 27px;
  gap: 5px;
  margin-top: auto;
  padding: 7px 3px 0 5px;
  border-top: 1px solid #363636;
`;
const FooterButton = styled.button`
  display: flex;
  align-items: center;
  justify-content: center;
  height: 15px;
  border-radius: 3px;
  background: #58585a;
`;

function FormPreview() {
  const box = (x, y, c = "#e3e3e3", w = 31) => <rect key={`${x}-${y}`} x={x} y={y} width={w} height="4" fill="#fff" stroke={c} strokeWidth="0.500" />;
  const word = (x, y, w, c = "#555") => <path key={`w${x}-${y}`} d={`M${x} ${y}h${w}`} stroke={c} strokeWidth="0.800" strokeDasharray="2 1" />;
  return (
    <Preview viewBox="0 0 154 74" aria-label="Artboard preview" preserveAspectRatio="none" height="74">
      <path d="M13 9h12" stroke="#333" strokeWidth="1.300" strokeDasharray="3 .5" />
      {word(28, 15, 7, "#e34a5c")}
      {box(16, 21)}{box(16, 33)}{box(16, 43)}
      <path d="M16 41.500h31" stroke="#888" strokeWidth="0.600" />
      <path d="M12 21v4" stroke="#e34a5c" />
      <path d="M16 19h2v6h-2z" fill="#bfe5db" />
    </Preview>
  );
}

function FormThumb() {
  const box = (x, y, c = "#e3e3e3", w = 31) => <rect key={`${x}-${y}`} x={x} y={y} width={w} height="4" fill="#fff" stroke={c} strokeWidth="0.500" />;
  const word = (x, y, w, c = "#555") => <path key={`w${x}-${y}`} d={`M${x} ${y}h${w}`} stroke={c} strokeWidth="0.800" strokeDasharray="2 1" />;
  return (
    <Preview viewBox="0 0 154 88" aria-label="Artboard preview">
      <path d="M13 10h12" stroke="#333" strokeWidth="1.300" strokeDasharray="3 .5" />
      {word(28, 18, 7, "#e34a5c")}
      {box(16, 24)}{box(16, 39)}{box(16, 51)}
      <path d="M16 49.500h31" stroke="#888" strokeWidth="0.600" />
      <path d="M12 25v5" stroke="#e34a5c" />
      <path d="M16 23h2v6h-2z" fill="#bfe5db" />
      {word(18, 27, 4)}{word(16, 37, 5)}{word(18, 41, 4)}{word(16, 49, 4)}{word(18, 54, 4)}
      {box(61, 24, "#8fb2e6")}{box(61, 39)}{box(61, 50, "#e8919b")}
      <path d="M57 57h36" stroke="#a9dccf" strokeWidth="1" />
      {word(61, 22, 5)}{word(63, 27, 20)}{word(61, 37, 5)}{word(63, 41, 5)}{word(63, 53, 3, "#e34a5c")}{word(61, 58, 14, "#e34a5c")}{word(62, 63, 4)}
      <rect x="61" y="65" width="31" height="4" fill="#e6e6e6" />
      <path d="M91 63h1.500v6H91z" fill="#a9dccf" />
      {box(108, 24)}{box(108, 39)}{box(108, 46)}
      <path d="M104 29.500h35M104 45h35" stroke="#bfe5db" strokeWidth="1" />
      {word(108, 22, 15)}{word(109, 27, 4)}{word(108, 32, 15, "#2f62ad")}{word(108, 38, 22)}{word(109, 42, 4)}{word(109, 49, 4)}{word(108, 53, 15, "#2f62ad")}
    </Preview>
  );
}

function ExportInspector() {
  return (
    <Inspector>
      <InspectorTop x="-4356" y="0" w="1455" h="840">
        <Block $pb={2}>
          <BlockTitle>Artboard</BlockTitle>
          <Check>Set as prototype start point</Check>
          <Check>Adjust content on resize</Check>
          <Check on well="#f9f9f9" h={18}>Add background color</Check>
          <Check on indent={8}>Include in Export</Check>
        </Block>
        <Caps $line>EXPORT</Caps>
        <PresetRow>
          <PresetName>Presets</PresetName>
          <Icon name="sliders" size={9} />
          <Icon name="knife" size={9} />
          <Icon name="plus" size={10} />
        </PresetRow>
        <ExportGrid>
          <ExportBox><PlainSelect aria-label="Size"><option>2x</option></PlainSelect><Icon name="chevron" size={5} /></ExportBox>
          <ExportBox><PlainSelect aria-label="Prefix/Suffix"><option>...</option></PlainSelect><Icon name="chevron" size={5} /></ExportBox>
          <ExportBox $lit><PlainSelect aria-label="Format"><option>PNG</option></PlainSelect><Icon name="updown" size={7} /></ExportBox>
          <CenterCell><Icon name="cross" size={8} color="#9d9d9d" /></CenterCell>
          <span>Size</span>
          <span>Prefix/Suffix</span>
          <span>Format</span>
        </ExportGrid>
        <FormThumb />
        <ExportFooter>
          <FooterButton>Export Selected...</FooterButton>
          <FooterButton aria-label="Share"><Icon name="share" size={9} /></FooterButton>
        </ExportFooter>
      </InspectorTop>
    </Inspector>
  );
}

/* ---------- artboards ---------- */

const Placed = styled.div`
  position: absolute;
  left: ${(p) => p.$x}px;
  top: ${(p) => p.$y}px;
`;
const BoardName = styled.p`
  height: 13px;
  padding-left: 2px;
  line-height: 11px;
  font-size: 8px;
  font-weight: ${(p) => (p.$pink ? 500 : 400)};
  color: ${(p) => (p.$pink ? "#cf55e8" : "#929294")};
  white-space: nowrap;
`;
const Board = styled.article`
  position: relative;
  width: ${(p) => p.$w}px;
  height: ${(p) => p.$h}px;
  background: ${(p) => p.$bg || "#fff"};
  color: #323232;
  font-family: ${(p) => (p.$pink ? NOTO : ROBOTO)};
  font-size: 4px;
  line-height: 6px;
`;
const Handle = styled.span`
  position: absolute;
  left: ${(p) => p.$x}%;
  top: ${(p) => p.$y}%;
  width: 5px;
  height: 5px;
  margin: -2px;
  background: #fff;
  border: 1px solid #b9b9b9;
`;
function Artboard({ x, y, w, h, name, pink, bg, selected, children }) {
  return (
    <Placed $x={x} $y={y - 13}>
      <BoardName $pink={pink}>{name}</BoardName>
      <Board $w={w} $h={h} $bg={bg} $pink={pink}>
        {children}
        {selected && [[0, 0], [50, 0], [100, 0], [0, 50], [100, 50], [0, 100], [50, 100], [100, 100]].map(([a, b]) => <Handle key={`${a}-${b}`} $x={a} $y={b} />)}
      </Board>
    </Placed>
  );
}

/* ---------- forms window ---------- */

const CanvasTitle = styled.h3`
  font-size: ${(p) => p.$s}px;
  line-height: ${(p) => p.$s + 4}px;
  font-weight: ${(p) => p.$w || 400};
  color: ${(p) => p.$c};
  white-space: nowrap;
`;
const Sheet = styled.div`
  padding: 23px 33px 0;
`;
const SheetTitle = styled.h4`
  font-family: ${INTER};
  font-size: 6px;
  line-height: 8px;
  font-weight: 700;
  white-space: nowrap;
`;
const FieldColumns = styled.div`
  display: grid;
  grid-template-columns: 80px 80px 80px;
  column-gap: ${(p) => p.$gap || 35}px;
  margin-top: 25px;
  padding-left: 5px;
`;
const FieldColumn = styled.div`
  display: flex;
  flex-direction: column;
  gap: ${(p) => p.$gap}px;
`;
const FieldBlock = styled.label`
  position: relative;
  display: block;
`;
const FieldName = styled.span`
  display: block;
  height: 8px;
  white-space: nowrap;
`;
const FIELD = {
  normal: css`border-color: #dcdcdc; background: #fff;`,
  hover: css`border-color: #a5a5a5; background: #fff;`,
  active: css`border-color: #8fb2e6; background: #fff;`,
  error: css`border-color: #f08b98; background: #fff; color: #e0334a;`,
  off: css`border-color: #e0e0e0; background: #ebebeb; color: #a0a0a0;`,
};
const FieldBox = styled.span`
  display: flex;
  align-items: center;
  height: 11px;
  padding: 0 4px;
  border: 1px solid;
  ${(p) => FIELD[p.$tone || "normal"]}
`;
const FieldInput = styled.input`
  width: 100%;
  height: 8px;
`;
const Note = styled.span`
  position: absolute;
  left: 0;
  top: 100%;
  padding-top: 2px;
  color: #e0334a;
  white-space: nowrap;
`;
const AddLink = styled.a`
  display: flex;
  align-items: center;
  gap: 2px;
  margin-top: 2px;
  color: #2f62ad;
  white-space: nowrap;
`;
const GreenBand = styled.span`
  position: absolute;
  left: ${(p) => p.$x}px;
  top: ${(p) => p.$y}px;
  width: ${(p) => p.$w}px;
  height: ${(p) => p.$h}px;
  background: rgba(61, 186, 159, 0.3);
`;
const Tag = styled.span`
  position: absolute;
  left: ${(p) => p.$x}px;
  top: ${(p) => p.$y}px;
  font-size: 3px;
  line-height: 4px;
  font-weight: 700;
  color: ${(p) => p.$c || GREEN};
  white-space: nowrap;
`;
const Variable = styled.span`
  position: absolute;
  left: ${(p) => p.$x || 0}px;
  top: ${(p) => p.$y}px;
  width: ${(p) => p.$w || 80}px;
  padding-bottom: 1px;
  border-bottom: 1px solid #f2808c;
  color: ${RED};
  font-weight: 600;
  font-size: 4px;
  line-height: 4px;
  text-align: center;
`;
const HeightMark = styled.span`
  position: absolute;
  left: ${(p) => p.$x}px;
  top: ${(p) => p.$y}px;
  display: flex;
  align-items: center;
  gap: 2px;
  height: ${(p) => p.$h}px;
  color: ${RED};
  font-size: 4px;
  font-weight: 700;
  &::after {
    content: "";
    align-self: stretch;
    width: 2px;
    border: 1px solid #f2808c;
    border-left: 0;
  }
`;

function Field({ name, value = "Select", tone, select, note, children }) {
  return (
    <FieldBlock>
      <FieldName>{name}</FieldName>
      <FieldBox $tone={tone}>
        {select ? (
          <PlainSelect aria-label={name || value}><option>{value}</option></PlainSelect>
        ) : (
          <FieldInput defaultValue={value} aria-label={name || value} />
        )}
        {(select || tone === "off") && <Icon name="chevron" size={4} color="#777" />}
      </FieldBox>
      {note && <Note>{note}</Note>}
      {children}
    </FieldBlock>
  );
}

const MenuBox = styled.div`
  display: flex;
  flex-direction: column;
  height: 47px;
  padding: 2px 4px;
  background: #fff;
  border: 1px solid #ececec;
  box-shadow: 0 1px 2px rgba(0, 0, 0, 0.2);
`;
const MenuItem = styled.button`
  flex: 1;
  text-align: left;
  color: ${(p) => (p.$on ? "#2f62ad" : "inherit")};
`;
const MenuGroup = styled.div`
  position: relative;
`;
const ToggleRow = styled.div`
  display: flex;
  margin-top: ${(p) => p.$mt}px;
`;
const ToggleCell = styled.div`
  position: relative;
  width: ${(p) => p.$w}px;
  white-space: nowrap;
`;
const ToggleHead = styled.p`
  height: 10px;
`;
const ToggleLabel = styled.label`
  display: flex;
  align-items: center;
  gap: 2px;
  padding-left: 1px;
  color: #2f62ad;
`;
const MiniBox = styled.input`
  appearance: none;
  width: 4px;
  height: 4px;
  border: 1px solid ${(p) => p.$c || "#cfcfcf"};
  border-radius: ${(p) => (p.type === "radio" ? "50%" : "1px")};
  background: ${(p) => p.$bg || "#fff"};
`;
const DoiGrid = styled.div`
  display: grid;
  grid-template-columns: 106px 106px 106px;
  column-gap: ${(p) => p.$gap || 18}px;
  margin-top: 29px;
  white-space: nowrap;
`;
const DoiCol = styled.div`
  position: relative;
  padding-top: ${(p) => p.$pt || 0}px;
`;
const DoiBox = styled.div`
  height: 26px;
  margin: 3px 0 ${(p) => p.$mb || 7}px;
  padding: 3px 4px;
  background: #f4f4f4;
`;
const DoiLine = styled.div`
  display: flex;
  justify-content: space-between;
  margin-bottom: 2px;
  color: #8a8a8a;
`;
const DoiName = styled.span`
  display: flex;
  align-items: center;
  gap: 1px;
  font-weight: 600;
  color: #323232;
`;
const InlineText = styled.p`
  height: 7px;
  margin: ${(p) => p.$mt}px 0 ${(p) => p.$mb}px;
  padding-left: 1px;
  line-height: 6px;
  width: 80px;
  border: 1px ${(p) => p.$b || "solid transparent"};
  white-space: nowrap;
`;

function Doi({ error }) {
  return (
    <>
      <DoiLine>
        <DoiName>DOI <Icon name="chevron" size={3} /></DoiName>
        <span>(This will pre-populate the form)</span>
      </DoiLine>
      <FieldBox as="label" $tone={error ? "error" : "normal"}>
        <FieldInput defaultValue={error ? "10.1186/S13059-014-04" : ""} aria-label="DOI" />
      </FieldBox>
    </>
  );
}

function ToggleBoard({ title, type, cells, mt }) {
  return (
    <Sheet>
      <SheetTitle>{title}</SheetTitle>
      <ToggleRow $mt={mt}>
        {cells.map((c, i) => (
          <ToggleCell key={i} $w={c.w}>
            <ToggleHead>{c.head}</ToggleHead>
            <ToggleLabel>
              <MiniBox type={type} $c={c.c} $bg={c.bg} />
              lorem ipsum
            </ToggleLabel>
            {c.extra}
          </ToggleCell>
        ))}
      </ToggleRow>
    </Sheet>
  );
}

const redMarks = (
  <>
    <HeightMark $x={-12} $y={10} $h={6}>4.5u</HeightMark>
    <Tag $x={0} $y={2} $c={RED}>4.5u</Tag>
  </>
);
const greenMarks = (
  <>
    <GreenBand $x={5} $y={6} $w={2} $h={11} />
    <Tag $x={4} $y={1}>2u</Tag>
  </>
);

const PAGES = [
  "Overview", "FOUNDATIONS ---", "Documentation", "Grid", "Component styles (WIP)", "Typography and text styles", "COMPONENTS ---",
  "Buttons / CTAs", "Colours", "Menus", "Form fields", "Containers", "Table", "Drag and drop", "Icons", "Notifications", "Tabs",
  "Modal", "Navigation", "Metadata panel", "Annotations / notes", "Tooltips", "Various",
];
const AddNote = styled.span`
  color: #e0334a;
  white-space: nowrap;
`;
const InlineHead = styled.p`
  margin-top: 13px;
  white-space: nowrap;
`;

function FormsWindow() {
  const layer = (n, open) => ({ name: `Documentation/form elements/${n}`, open, c: "#94879f" });
  return (
    <Shell
      k={1}
      h={612}
      pages={PAGES}
      selected="Documentation"
      selectedTone="hot"
      layers={[layer("tabs", true), layer("form fields"), layer("dropdown"), layer("check box"), layer("radio button", true)]}
      layersH={100}
      zoom="38%"
      inspector={<ExportInspector />}
    >
      <Placed $x={18} $y={19}><CanvasTitle $s={14} $w={700} $c="#6f6f70">Forms</CanvasTitle></Placed>

      <Artboard x={19} y={85} w={385} h={222} name="Documentation/form elements/form fields" bg="#f9f9f9" selected>
        <Sheet>
          <SheetTitle>Form field</SheetTitle>
          <FieldColumns $gap={36}>
            <FieldColumn $gap={15}>
              <Field>
                <Variable $y={-12}>variable</Variable>
                <Tag $x={1} $y={1}>4u</Tag>
                <GreenBand $x={0} $y={5} $w={5} $h={14} />
                <HeightMark $x={-17} $y={8} $h={11}>10u</HeightMark>
              </Field>
              <Field name="Default" />
              <Field name="Hover" tone="hover" />
            </FieldColumn>
            <FieldColumn $gap={15}>
              <Field name="Active" tone="active" value="Silva, Marc; Henderson, Philip" />
              <Field name="Entered" />
              <Field name="Error" tone="error" note="Please enter valid text">
                <GreenBand $x={-4} $y={19} $w={84} $h={2} />
                <Tag $x={-10} $y={18}>3u</Tag>
              </Field>
              <Field name="Inactive" tone="off">
                <GreenBand $x={77} $y={5} $w={3} $h={14} />
                <Tag $x={76} $y={0}>3u</Tag>
              </Field>
            </FieldColumn>
            <FieldColumn $gap={12}>
              <div>
                <Field name="Add new form field CTA">
                  <GreenBand $x={-3} $y={18} $w={83} $h={3} />
                  <Tag $x={-9} $y={17}>3u</Tag>
                </Field>
                <AddLink href="#"><Icon name="addCircle" size={5} />Add another author</AddLink>
              </div>
              <div>
                <Field name="Add new form field CTA (new field)">
                  <GreenBand $x={-3} $y={18} $w={83} $h={3} />
                  <Tag $x={-9} $y={17}>3u</Tag>
                </Field>
                <FieldBox as="label"><FieldInput defaultValue="Select" aria-label="Author" /></FieldBox>
                <AddLink href="#"><Icon name="addCircle" size={5} />Add another author</AddLink>
              </div>
            </FieldColumn>
          </FieldColumns>
        </Sheet>
      </Artboard>

      <Artboard x={421} y={85} w={385} h={222} name="Documentation/form elements/dropdown" bg="#f9f9f9">
        <Sheet>
          <SheetTitle>Drop down</SheetTitle>
          <FieldColumns>
            <FieldColumn $gap={8}>
              <Field select>
                <Variable $y={-12}>variable</Variable>
                <Tag $x={0} $y={1}>4u</Tag>
                <Tag $x={76} $y={1}>3u</Tag>
                <GreenBand $x={0} $y={5} $w={4} $h={14} />
                <GreenBand $x={77} $y={5} $w={3} $h={14} />
              </Field>
              <Field select name="Default" />
              <Field select name="Hover" tone="hover" />
              <Field select name="Inactive" tone="off" />
              <Field select name="Error" tone="error" note="Please select an option" />
            </FieldColumn>
            <FieldColumn $gap={12}>
              {["Active / open", "Open hover"].map((n, g) => (
                <MenuGroup key={n}>
                  <FieldName>{n}</FieldName>
                  <MenuBox>
                    {[1, 2, 3, 4, 5].map((i) => <MenuItem key={i} $on={g && i === 4}>Item {i}</MenuItem>)}
                  </MenuBox>
                  {g === 1 && <Placed $x={44} $y={38}><Icon name="hand" size={7} /></Placed>}
                </MenuGroup>
              ))}
            </FieldColumn>
          </FieldColumns>
        </Sheet>
      </Artboard>

      <Artboard x={19} y={334} w={316} h={98} name="Documentation/form elements/check box" bg="#f9f9f9">
        <ToggleBoard
          title="Check box"
          type="checkbox"
          mt={14}
          cells={[
            { w: 43, head: "Default" },
            { w: 42, head: "Hover / hit", c: "#2f62ad" },
            { w: 42, head: "Active", c: "#25549d", bg: "#25549d" },
            { w: 58, head: "Active - Tristate", c: "#25549d", bg: "#25549d" },
            { w: 40, head: "", c: "#f2808c", bg: "#f2a0aa", extra: redMarks },
            { w: 30, head: "", extra: greenMarks },
          ]}
        />
      </Artboard>

      <Artboard x={351} y={333} w={276} h={101} name="Documentation/form elements/radio button" bg="#f9f9f9">
        <ToggleBoard
          title="Radio button"
          type="radio"
          mt={15}
          cells={[
            { w: 43, head: "Default" },
            { w: 42, head: "Hover / hit", c: "#2f62ad" },
            { w: 53, head: "Active", c: "#7fa0d2", bg: "#25549d" },
            { w: 40, head: "", c: "#f2808c", bg: "#f2a0aa", extra: redMarks },
            { w: 30, head: "", extra: greenMarks },
          ]}
        />
      </Artboard>

      <Artboard x={19} y={457} w={433} h={200} name="Documentation/form elements/DOI">
        <Sheet>
          <SheetTitle>DOI field</SheetTitle>
          <DoiGrid>
            <DoiCol>
              Default state
              <DoiBox><Doi /></DoiBox>
              form field hover
              <DoiBox><Doi /></DoiBox>
            </DoiCol>
            <DoiCol>
              Dropdown hover
              <DoiBox $mb={16}><Doi /></DoiBox>
              Dropdown active
              <DoiBox><Doi /></DoiBox>
              <Placed $x={14} $y={13}><Icon name="hand" size={7} /></Placed>
            </DoiCol>
            <DoiCol $pt={6}>
              <DoiBox $mb={7}><Doi error /></DoiBox>
              <Placed $x={4} $y={29}><AddNote>Please enter a valid DOI</AddNote></Placed>
              <GreenBand $x={-4} $y={29} $w={110} $h={2} />
              <GreenBand $x={-4} $y={35} $w={110} $h={2} />
              <Tag $x={-10} $y={28}>3u</Tag>
              <Tag $x={-10} $y={34}>3u</Tag>
              <Variable $y={50} $w={106}>variable</Variable>
            </DoiCol>
          </DoiGrid>
        </Sheet>
      </Artboard>

      <Artboard x={466} y={457} w={147} h={200} name="Documentation/f...line-editable fileds">
        <Sheet>
          <SheetTitle>Inline editable fields</SheetTitle>
          <InlineHead>Default state - Plain text</InlineHead>
          <InlineText $mt={5} $mb={10}>This is a title for a reference</InlineText>
          Hover
          <InlineText $mt={4} $mb={12} $b="dashed #9fbfe8">This is a title for a reference</InlineText>
          Active
          <InlineText $mt={4} $mb={4} $b="solid #8fb2e6">This is a title for a reference</InlineText>
        </Sheet>
      </Artboard>
    </Shell>
  );
}

/* ---------- metadata window ---------- */

const ABSTRACT = [
  "We examine the impact of baryon acoustic oscillation (BAO) scale",
  "measurements on the discrepancy between the value of the Hubble",
  "constant (H0) inferred from the local distance ladder and from Planck",
  "cosmic microwave background (CMB) data. While the BAO data",
  "alone cannot constrain H0, we show that combining the latest BAO",
  "results with WMAP, Atacama Cosmology Telescope (ACT), or South",
  "Pole Telescope (SPT) CMB data produces values of H0 that are",
  "2.4-3.1σ lower than the distance ladder, independent of Planck, and",
  "that this downward pull was less apparent in some earlier analyses",
  "that used only angle-averaged BAO scale constraints rather than full",
  "anisotropic information. At the same time, the combination of BAO",
  "and CMB data also disfavors the lower values of H0 preferred by the",
  "Planck high-multipole temperature power spectrum. Combining",
  "galaxy and Lyman-α forest (Lyα) BAO with a precise estimate of the",
  "primordial deuterium abundance produces H0=66.98±1.18 km s−1",
  "Mpc−1 for the flat ΛCDM model. This value is completely",
  "independent of CMB anisotropy constraints and is 3.0σ lower than",
  "the latest distance ladder constraint, although 2.4σ tension also",
  "exists between the galaxy BAO and Lyα BAO. These results show",
  "that it is not possible to explain the H0 disagreement solely with a",
  "systematic error specific to the Planck data. The fact that tensions",
  "remain even after the removal of any single data set makes this",
  "intriguing puzzle all the more challenging to resolve.",
];
const IDS = [["ArXivID:", "10.1103/PhysRevLett.116.061102"], ["DOI:", "10.1103/PhysRevLett.116.061102"], ["ISBN:", "1471-0072 (Print)\\n1471-0072 (Linking)"], ["ISSN:", "1471-0072"], ["PMID:", "16314867"]];

const Flow = styled.div`
  white-space: nowrap;
`;
const PanelTabs = styled.div`
  display: flex;
  align-items: center;
  gap: 6px;
  height: 23px;
  padding: 0 8px 0 11px;
  border-bottom: 1px solid #efefef;
  color: #505050;
  font-family: ${ROBOTO};
  font-size: 5px;
`;
const PanelTab = styled.button`
  height: 23px;
  border-bottom: 1px solid ${(p) => (p.$on ? "#505050" : "transparent")};
  font-weight: ${(p) => (p.$on ? 700 : 400)};
`;
const Count = styled.span`
  width: 5px;
  height: 5px;
  margin: 0 auto 0 -4px;
  border-radius: 1px;
  background: #1fbf9c;
  color: #fff;
  font-size: 4px;
  line-height: 5px;
  text-align: center;
`;
const PanelBody = styled.div`
  display: flex;
  flex-direction: column;
  gap: 11px;
  padding: 10px 0 0 11px;
`;
const SmallHead = styled.h4`
  display: flex;
  align-items: center;
  gap: 2px;
  height: 6px;
  color: #505050;
`;
const ArticleTitle = styled.h3`
  margin: 3px 0 5px;
  font-family: ${INTER};
  font-size: 7px;
  line-height: 9px;
  color: #2a2a2a;
`;
const Byline = styled.p`
  line-height: 6px;
  margin-bottom: 4px;
`;
const Journal = styled.p`
  line-height: 6px;
  font-style: italic;
  color: #737373;
`;
const Blue = styled.a`
  color: #1d5fc0;
`;
const CtaRow = styled.div`
  display: flex;
  gap: 3px;
`;
const Cta = styled.button`
  display: flex;
  align-items: center;
  justify-content: center;
  gap: 2px;
  width: ${(p) => p.$w}px;
  height: 12px;
  border: 1px solid #cfdbee;
  background: #fff;
  color: #1d5fc0;
`;
const Lines = styled.div`
  display: grid;
  grid-auto-rows: 1fr;
  height: ${(p) => p.$h}px;
  margin-top: 3px;
  color: #3a3a3a;
`;
const Line = styled.p`
  position: relative;
  color: ${(p) => (p.$bold ? "#111" : "inherit")};
  font-weight: ${(p) => (p.$bold ? 500 : 400)};
`;
const Over = styled(Blue)`
  position: absolute;
  left: 119px;
  font-weight: 700;
`;
const Pills = styled.div`
  display: flex;
  gap: 3px;
  margin-top: 5px;
`;
const Pill = styled.span`
  display: flex;
  align-items: center;
  justify-content: center;
  gap: 3px;
  width: ${(p) => p.$w}px;
  height: ${(p) => (p.$grey ? 9 : 11)}px;
  border: 1px solid ${(p) => (p.$grey ? "#ebebeb" : "#d2d2d2")};
  border-radius: 6px;
  background: ${(p) => (p.$grey ? "#ebebeb" : "#fff")};
`;
const TagPills = styled(Pills)`
  gap: 3px;
  height: 11px;
  align-items: center;
`;
const UrlText = styled.p`
  display: flex;
  justify-content: space-between;
  margin-top: 4px;
  padding-right: 5px;
`;
const Ids = styled.dl`
  margin-top: 2px;
`;
const IdRow = styled.div`
  display: flex;
  align-items: center;
  height: 11px;
  padding-right: 1px;
`;
const IdKey = styled.dt`
  width: 22px;
`;
const IdValue = styled.dd`
  flex: 1;
`;
const ShareLabel = styled.label`
  display: flex;
  align-items: center;
  gap: 4px;
  margin-top: 4px;
`;
const ShareTick = styled(Tick)`
  width: 6px;
  height: 6px;
  border-radius: 1px;
  &:checked { background: #25549d; }
  &:checked::after { left: 1px; top: 1px; width: 3px; height: 2px; }
`;

function Teaser({ wide }) {
  return (
    <div>
      <SmallHead>JOURNAL ARTICLE <Icon name="chevron" size={4} /></SmallHead>
      <ArticleTitle>
        Elucidating ΛCDM: Impact of Baryon
        <br />
        Acoustic Oscillation Measurements on{wide && " the"}
        <br />
        {!wide && "the "}Hubble Constant Discrepancy
      </ArticleTitle>
      <Byline>Ross-Adams H, Lamb A, Dunning M, et al. <Blue href="#">See more</Blue></Byline>
      <Journal>EBioMedicine vol 9, Issue 9 (2015)</Journal>
    </div>
  );
}
const Ctas = () => (
  <CtaRow>
    <Cta $w={29}><Icon name="read" size={5} />Read</Cta>
    <Cta $w={42}><Icon name="globe" size={5} />View online</Cta>
    <Cta $w={26}><Icon name="cite" size={5} />Cite</Cta>
    <Cta $w={30}><Icon name="arrow" size={5} />Share</Cta>
  </CtaRow>
);
function Abstract({ mode }) {
  const lines = mode === "short" ? ABSTRACT.slice(0, 10) : mode === "none" ? ["Add text"] : ABSTRACT;
  return (
    <div>
      <SmallHead>ABSTRACT</SmallHead>
      <Lines $h={{ short: 67, none: 7 }[mode] || 155}>
        {lines.map((l, i) => (
          <Line key={i} $bold={mode === "double" && i < 10}>
            {mode === "short" && i === 9 ? (
              <>that used only angle-averaged BAO scale constraints... <Blue href="#">Read more</Blue></>
            ) : l}
            {mode === "double" && i === 9 && <Over href="#">Read more</Over>}
          </Line>
        ))}
      </Lines>
    </div>
  );
}
const Files = () => (
  <div>
    <SmallHead>FILES <Icon name="addCircle" size={6} /></SmallHead>
    <Pills>
      <Pill $w={78}><Icon name="doc" size={5} />Ross-Adams et al 2017.pdf<Icon name="cross" size={3} /></Pill>
      <Pill $w={47}><Icon name="doc" size={5} />DMRes.pdf<Icon name="cross" size={3} /></Pill>
    </Pills>
  </div>
);
const Tags = () => (
  <div>
    <SmallHead>TAGS <Icon name="addCircle" size={6} /></SmallHead>
    <TagPills>
      <Pill $grey $w={36}>milky way<Icon name="cross" size={3} /></Pill>
      <Pill $grey $w={38}>astronomy<Icon name="cross" size={3} /></Pill>
      <Pill $grey $w={26}>Halo<Icon name="cross" size={3} /></Pill>
    </TagPills>
  </div>
);
const Url = () => (
  <div>
    <SmallHead>URL <Icon name="addCircle" size={6} /></SmallHead>
    <UrlText>papers3://publication/uuid/514B97BF-B151-40A6-9721-B0...<Icon name="refresh" size={6} color="#aaa" /></UrlText>
  </div>
);
const Catalog = ({ refresh }) => (
  <div>
    <SmallHead>CATALOG ID</SmallHead>
    <Ids>
      {IDS.map(([a, b]) => (
        <IdRow key={a}>
          <IdKey>{a}</IdKey>
          <IdValue>{b}</IdValue>
          {refresh && <Icon name="refresh" size={6} color="#aaa" />}
        </IdRow>
      ))}
    </Ids>
  </div>
);
const Share = () => (
  <div>
    <SmallHead>MENDELEY CATALOG</SmallHead>
    <ShareLabel>
      <ShareTick type="checkbox" defaultChecked />
      <span>Share reference anonymously with the <Blue href="#">Mendeley Web Catalog</Blue></span>
    </ShareLabel>
  </div>
);
const ShareWrap = styled.div`
  margin: -3px 0 0 -11px;
  padding: ${(p) => (p.$line ? 7 : 0)}px 0 0 11px;
  border-top: ${(p) => (p.$line ? "1px solid #efefef" : "0")};
`;
function MetaPanel({ mode }) {
  return (
    <Flow>
      <PanelTabs>
        <PanelTab $on>Info</PanelTab>
        <PanelTab>Notes</PanelTab>
        <PanelTab>Bibliography</PanelTab>
        <PanelTab>Recommendations</PanelTab>
        <Count>3</Count>
        <Icon name="cross" size={6} />
      </PanelTabs>
      <PanelBody>
        <Teaser />
        <Ctas />
        <Abstract mode={mode} />
        <Files />
        <Tags />
        {mode === "full" ? <Files /> : <Url />}
        <Catalog />
        <ShareWrap $line={mode === "full"}><Share /></ShareWrap>
      </PanelBody>
    </Flow>
  );
}

const META_OVERRIDES = [
  [0, "diamond", "metadata panel/...ude from catalog 1"], [0, "check", "Symbol"],
  [1, "diamond", "form field/check box/uncheck 1"], [1, "check", "Symbol"],
  [2, "diamond", "icon/action/tick/12"], [2, "check", "Symbol"],
  [3, "diamond", "col/grey5"], [3, "check", "Symbol"],
  [4, "style", "Rectangle 10"], [3, "check", "Layer Style"],
  [2, "diamond", "col/NEWELS blue -30"], [2, "check", "Symbol"],
  [3, "style", "Rectangle 10"], [3, "check", "Layer Style"],
  [1, "text", "Catalogue ID"],
];

function MetadataWindow() {
  const layer = (n, o) => ({ name: `metadata panel/${n}`, c: "#c94be3", ...o });
  const boards = [
    ["teaser", 11, 50, 148, 56, <Teaser wide />],
    ["CTAs", 12, 128, 135, 12, <Ctas />],
    ["abstract", 11, 163, 148, 163, <Abstract mode="double" />],
    ["attachments", 11, 352, 148, 22, <Files />],
    ["Tags", 11, 393, 148, 22, <Tags />],
    ["Webaddress", 11, 432, 155, 17, <Url />],
    ["Catalog-ID", 10, 469, 155, 63, <Catalog refresh />],
    ["", 10, 550, 148, 16, <Share />],
  ];
  return (
    <Shell
      k={1}
      h={615}
      pages={[...PAGES.slice(1), "images"]}
      selected="Metadata panel"
      selectedTone="soft"
      line
      layers={[layer("expanded abstract", { open: true }), layer("default", { on: true }), layer("Doc/attachments"), layer("Doc/Tags"), layer("Doc/abstract")]}
      layersH={103}
      zoom="49%"
      dimSymbol
      inspector={
        <SymbolInspector
          frame={{ x: "1038", y: "-266", w: "492", h: "1188" }}
          instances
          background
          wellColor="#ffffff"
          overrides={META_OVERRIDES}
        />
      }
    >
      <Placed $x={12} $y={15}><CanvasTitle $s={8} $c="#a4a4a5">Metadata groups</CanvasTitle></Placed>
      <Placed $x={215} $y={15}><CanvasTitle $s={8} $c="#a4a4a5">Metadata panel variants</CanvasTitle></Placed>
      {boards.map(([n, x, y, w, h, content]) => (
        <Artboard key={n} x={x} y={y} w={w} h={h} pink name={n ? `metadata panel/Doc/${n}` : "metadata panel/D...lude from catalog"}>
          <Flow>{content}</Flow>
        </Artboard>
      ))}
      <Artboard x={214} y={50} w={169} h={407} pink selected name="metadata panel/default"><MetaPanel mode="short" /></Artboard>
      <Artboard x={393} y={50} w={169} h={496} pink name="metadata panel/expanded abstract"><MetaPanel mode="full" /></Artboard>
      <Artboard x={577} y={50} w={169} h={343} pink name="metadata panel/no abstract"><MetaPanel mode="none" /></Artboard>
    </Shell>
  );
}

/* ---------- buttons window ---------- */

const MiniTitle = styled.h3`
  height: ${(p) => p.$h || 17}px;
  font-size: 5px;
  line-height: 7px;
  font-weight: 600;
  color: #d8d8d8;
  white-space: nowrap;
`;
const MiniGrid = styled.div`
  display: grid;
  grid-template-columns: repeat(3, ${(p) => p.$col}px);
`;
const MiniCell = styled.div`
  height: ${(p) => p.$h}px;
`;
const MiniName = styled.p`
  height: 5px;
  padding-left: 1px;
  font-size: 4px;
  line-height: 4px;
  color: #cf55e8;
  white-space: nowrap;
`;
const MINI = {
  primary: css`background: #0f55a6; color: #dbe6f5;`,
  dark: css`background: #123a73; color: #dbe6f5;`,
  light: css`background: #fff; color: #25549d; box-shadow: inset 0 0 0 1px #a9bfe0;`,
  plain: css`background: #fff; color: #25549d; box-shadow: inset 0 0 0 1px #dcdcdc;`,
  off: css`background: #fff; color: #b9b9b9; box-shadow: inset 0 0 0 1px #dcdcdc;`,
};
const MiniButton = styled.button`
  display: flex;
  align-items: center;
  justify-content: center;
  gap: 1px;
  width: ${(p) => p.$w}px;
  height: ${(p) => p.$h}px;
  font-size: 4px;
  line-height: 4px;
  font-weight: 500;
  ${(p) => MINI[p.$t]}
`;
const MiniSelected = styled.div`
  position: relative;
  width: 27px;
`;
const MiniPill = styled.div`
  display: flex;
  align-items: center;
  justify-content: center;
  gap: 2px;
  width: 34px;
  height: 8px;
  background: #fff;
  color: #444;
  font-size: 4px;
  white-space: nowrap;
  border-radius: ${(p) => (p.$round ? 3 : 0)}px;
`;
const MiniHandle = styled.span`
  position: absolute;
  left: ${(p) => p.$x}%;
  top: ${(p) => p.$y}%;
  width: 2px;
  height: 2px;
  margin: -1px;
  background: #fff;
`;

const SIZES = [
  { gap: 24, h: 11, w: [27, 27, 22], n: ["CTA/b...onleft", "CTA/b...nright", "CTA/...icon"] },
  { gap: 21, h: 9, w: [23, 23, 18], n: ["CTA/...nleft", "CTA/...right", "CT...icon"] },
  { gap: 20, h: 8, w: [20, 20, 16], n: ["CTA...nleft", "CTA...right", "CT...con"] },
];
function MiniGroup({ x, y, title, tone, selected }) {
  return (
    <Placed $x={x} $y={y}>
      <MiniTitle>{title}</MiniTitle>
      <MiniGrid $col={39}>
        {SIZES.map((s, r) =>
          s.n.map((n, c) => (
            <MiniCell key={`${r}-${c}`} $h={s.gap}>
              <MiniName>{n}</MiniName>
              <MiniSelected>
                <MiniButton $t={tone} $w={s.w[c]} $h={s.h}>
                  {c === 0 && <LinkOut size={4} />}
                  Button
                  {c === 1 && <LinkOut size={4} />}
                </MiniButton>
                {selected && !r && !c && [[0, 0], [50, 0], [100, 0], [0, 50], [100, 50], [0, 100], [50, 100], [100, 100]].map(([a, b]) => <MiniHandle key={`${a}-${b}`} $x={a} $y={b} />)}
              </MiniSelected>
            </MiniCell>
          ))
        )}
      </MiniGrid>
    </Placed>
  );
}

const MakeExportable = styled(Caps)`
  border-top: 1px solid #363636;
`;

function ButtonsWindow() {
  const layer = (n, o) => ({ name: `CTA/button/${n}`, c: "#a04cc4", ...o });
  const states = [["CT...ry", "primary"], ["CT...ry", "dark"], ["CT...ry", "light"], ["CT...ry", "light"], ["CT...ry", "light"], ["CT...ry", "plain"], ["CT...nt", "plain"], ["CT...ed", "plain"], ["CT...ed", "plain"]];
  return (
    <Shell
      k={0.49}
      h={303}
      face={ROBOTO}
      bleed={2}
      pages={PAGES}
      selected="Buttons / CTAs"
      selectedTone="soft"
      layers={[layer("Medium/Primary/iconright"), {}, layer("Small/Primary/iconright"), layer("Small/Primary/iconleft"), layer("Medium/Primary/iconleft"), layer("Large/Primary/iconleft", { on: true })]}
      layersH={50}
      zoom="74%"
      dimSymbol
      inspector={
        <SymbolInspector
          frame={{ x: "616", y: "47", w: "107", h: "40" }}
          wellColor="#999999"
          overrides={[
            [0, "text", "Label"], [0, "check", "Text Value"], [0, "diamond", "03 icons/group"], [0, "check", "Symbol"],
            [1, "diamond", "col/grey5"], [1, "check", "Symbol"], [2, "style", "Rectangle 10"], [2, "check", "Layer Style"],
            [0, "diamond", "Button/container/Primary"], [0, "check", "Symbol"],
          ]}
          tail={<MakeExportable>MAKE EXPORTABLE<Icon name="plus" size={8} /></MakeExportable>}
        />
      }
    >
      <MiniGroup x={12} y={10} title="Primary" tone="primary" selected />
      <MiniGroup x={138} y={10} title="Secondary" tone="light" />
      <MiniGroup x={12} y={104} title="Tertiary" tone="plain" />
      <MiniGroup x={138} y={104} title="Disabled" tone="off" />
      <Placed $x={12} $y={201}>
        <MiniTitle $h={12}>States</MiniTitle>
        <MiniGrid $col={26}>
          {states.map(([n, t], i) => (
            <MiniCell key={i} $h={19}>
              <MiniName>{n}</MiniName>
              <MiniButton $t={t} $w={14} $h={9} aria-label={n} />
            </MiniCell>
          ))}
        </MiniGrid>
      </Placed>
      <Placed $x={267} $y={10}>
        <MiniTitle>CTA / Attachment</MiniTitle>
        <MiniCell $h={24}>
          <MiniName>CTA/att...t/default</MiniName>
          <MiniPill><LinkOut size={4} />DMRes.pdf ×</MiniPill>
        </MiniCell>
        <MiniCell $h={24}>
          <MiniName>CTA/att...t/active</MiniName>
          <MiniPill $round><LinkOut size={4} />DMRes.pdf ×</MiniPill>
        </MiniCell>
      </Placed>
      <Placed $x={332} $y={10}>
        <MiniTitle>C</MiniTitle>
        <MiniName>C</MiniName>
        <MiniPill />
      </Placed>
    </Shell>
  );
}

export default function App() {
  return (
    <Page>
      <Global />
      <Colours />
      <HalfRow>
        <ButtonVariants />
        <ButtonsWindow />
      </HalfRow>
      <FormsWindow />
      <MetadataWindow />
    </Page>
  );
}
